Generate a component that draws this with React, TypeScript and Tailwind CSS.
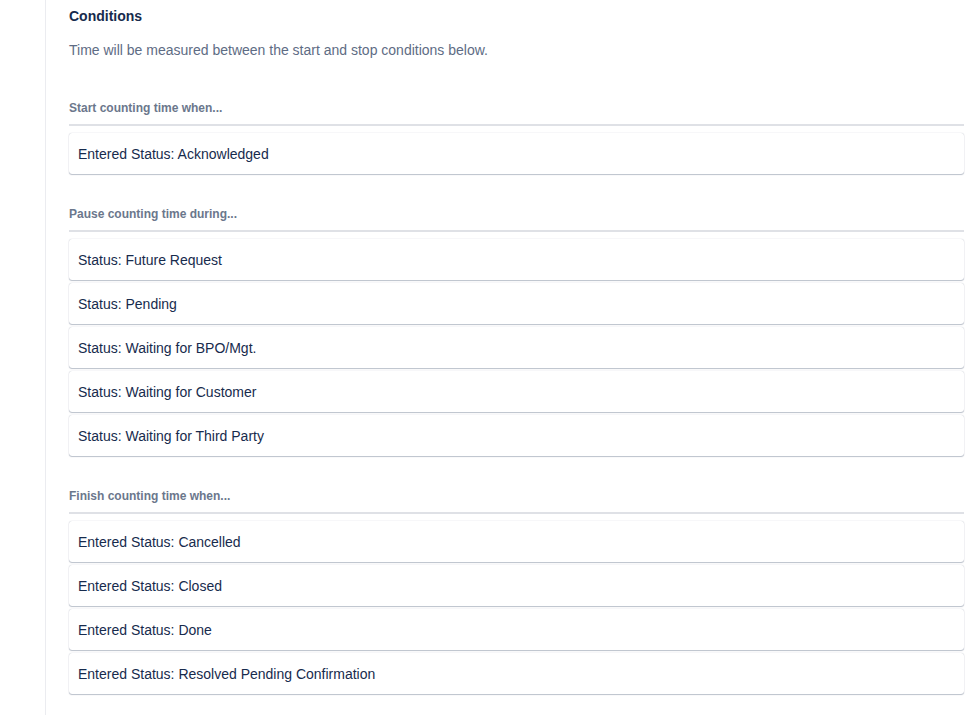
const sections: { label: string; items: string[] }[] = [
  {
    label: "Start counting time when...",
    items: ["Entered Status: Acknowledged"],
  },
  {
    label: "Pause counting time during...",
    items: [
      "Status: Future Request",
      "Status: Pending",
      "Status: Waiting for BPO/Mgt.",
      "Status: Waiting for Customer",
      "Status: Waiting for Third Party",
    ],
  },
  {
    label: "Finish counting time when...",
    items: [
      "Entered Status: Cancelled",
      "Entered Status: Closed",
      "Entered Status: Done",
      "Entered Status: Resolved Pending Confirmation",
    ],
  },
];

function ConditionCard({ text }: { text: string }) {
  return (
    <div className="h-[41px] flex items-center pl-[9px] pt-px bg-white rounded-[3px] shadow-[0_1px_1px_rgba(9,30,66,0.25),0_0_1px_rgba(9,30,66,0.31)] text-[14px] text-[#172b4d]">
      {text}
    </div>
  );
}

export default function App() {
  return (
    <div
      className="flex min-h-screen bg-white"
      style={{ fontFamily: '"Liberation Sans", Arial, sans-serif' }}
    >
      {/* gutter */}
      <div className="w-[45px] shrink-0" />

      <main className="flex-1 border-l border-[#ebecf0] pl-[23px] pr-px pt-[6px] pb-6">
        <h2 className="text-[14px] leading-5 font-bold text-[#172b4d]">
          Conditions
        </h2>
        <p className="mt-[14px] text-[14px] leading-5 text-[#5e6c84]">
          Time will be measured between the start and stop conditions below.
        </p>

        {sections.map((s, i) => (
          <section key={s.label} className={i === 0 ? "mt-10" : "mt-8"}>
            <h3 className="text-[12px] leading-4 font-bold text-[#6b778c]">
              {s.label}
            </h3>
            <div className="mt-2 h-[2px] bg-[#dfe1e6]" />
            <div className="mt-[7px] flex flex-col gap-[3px]">
              {s.items.map((item) => (
                <ConditionCard key={item} text={item} />
              ))}
            </div>
          </section>
        ))}
      </main>
    </div>
  );
}
